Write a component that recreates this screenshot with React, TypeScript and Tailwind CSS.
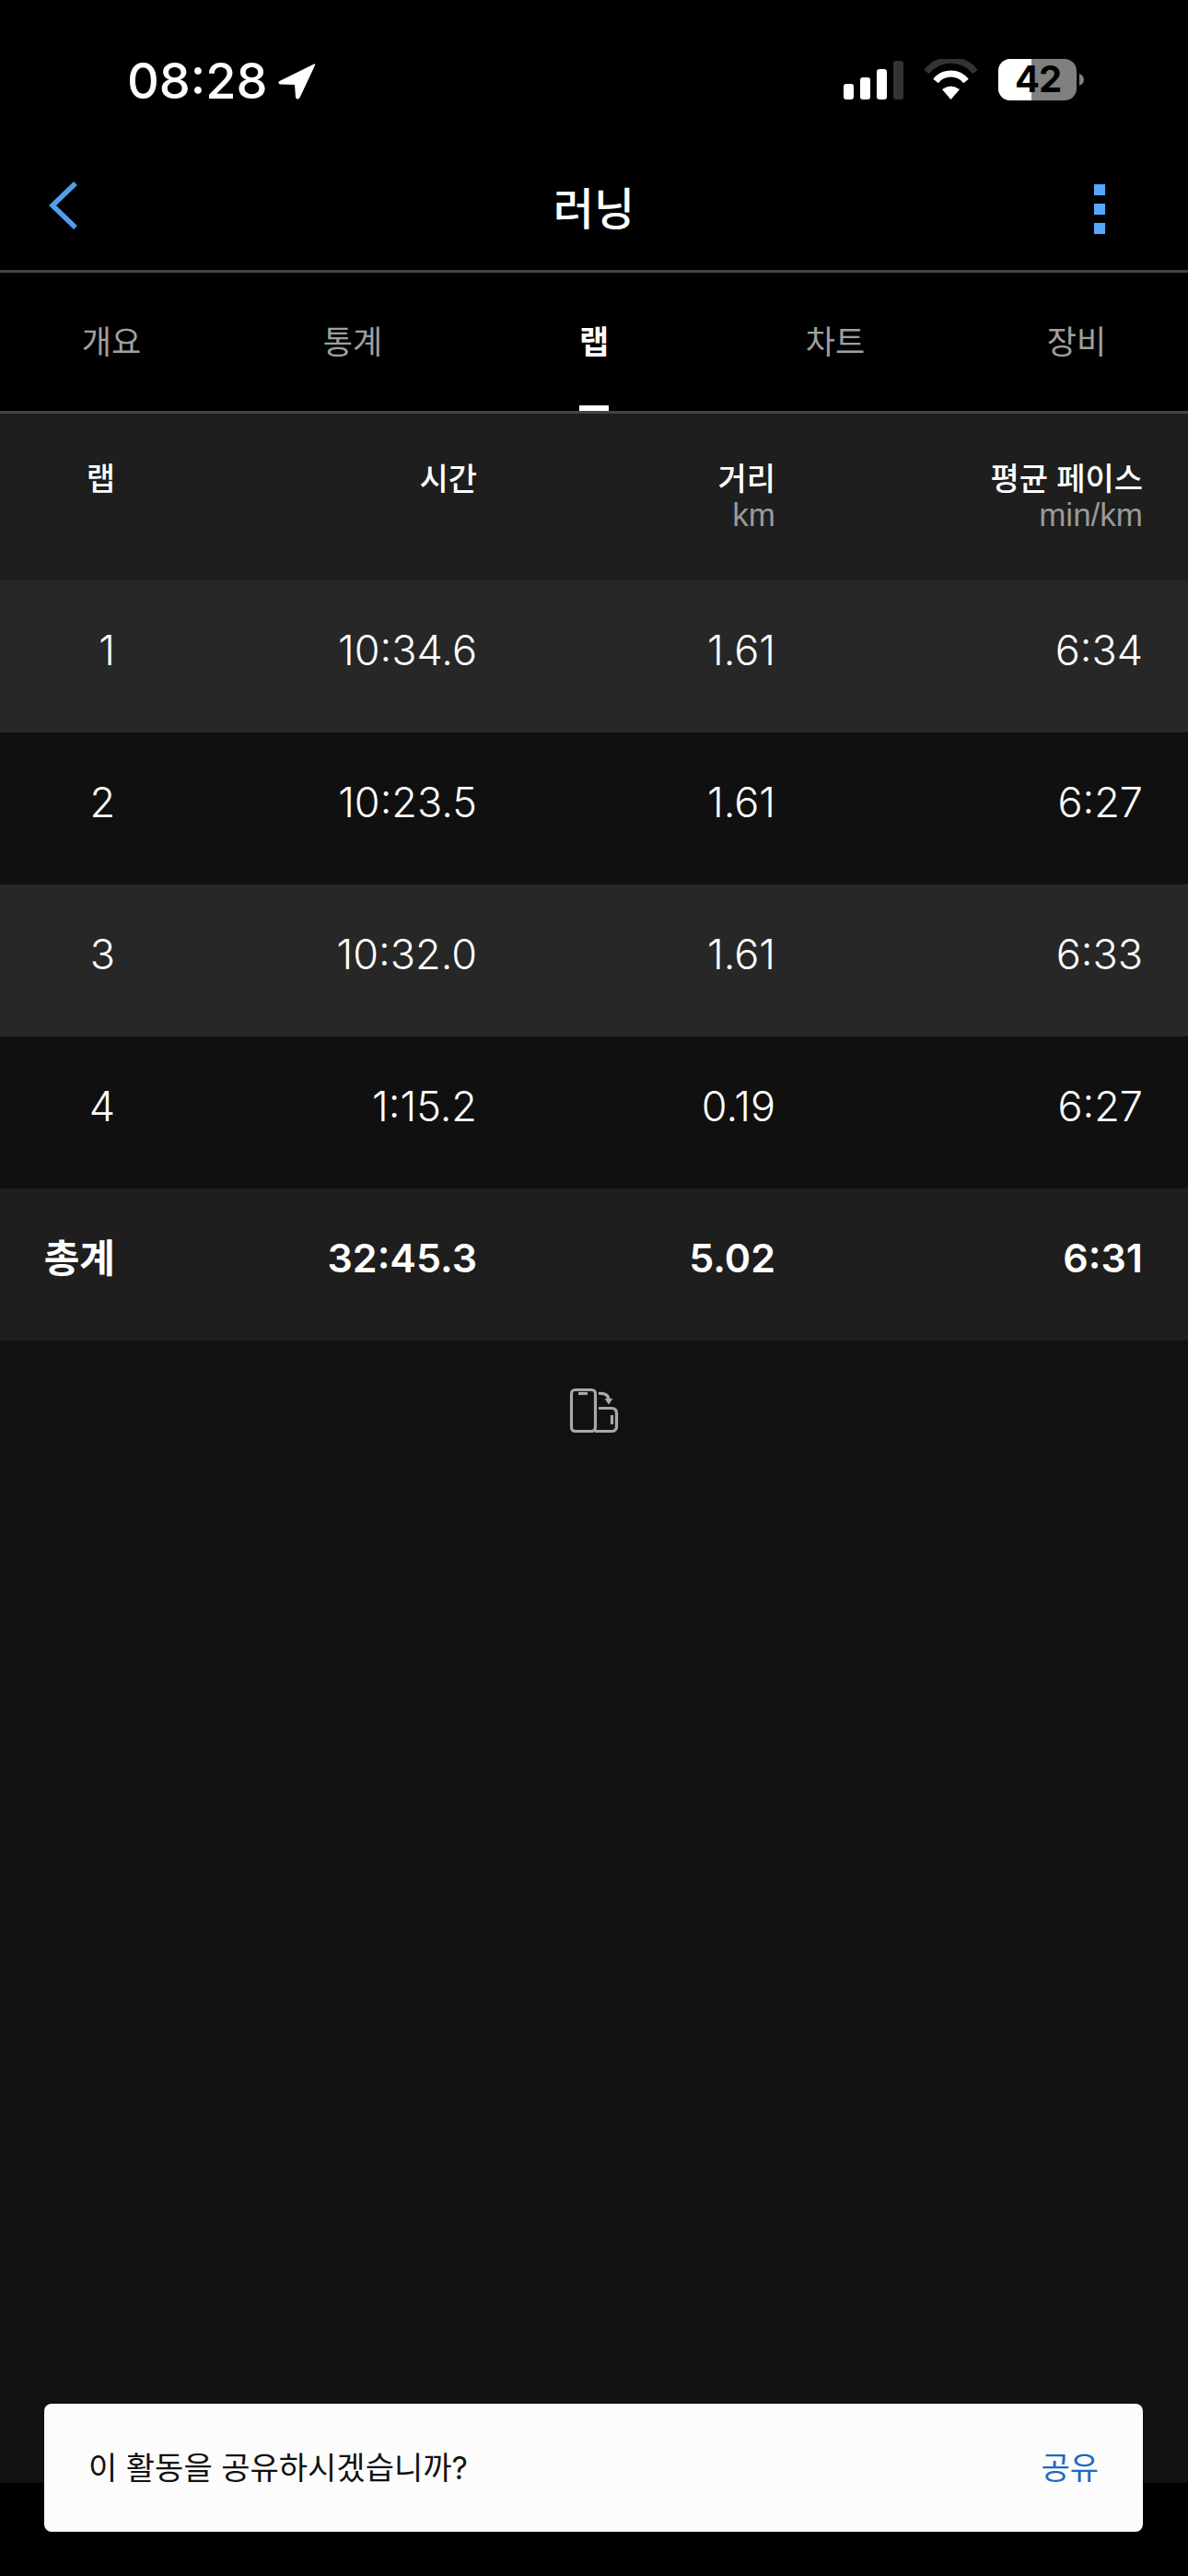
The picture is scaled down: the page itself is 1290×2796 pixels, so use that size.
const font = "font-['Inter','Noto_Sans_CJK_KR',sans-serif]";
const thin = "font-['Liberation_Sans','Noto_Sans_CJK_KR',sans-serif]";

const rows = [
  { lap: "1", time: "10:34.6", dist: "1.61", pace: "6:34", bg: "bg-[#272727]" },
  { lap: "2", time: "10:23.5", dist: "1.61", pace: "6:27", bg: "bg-[#101010]" },
  { lap: "3", time: "10:32.0", dist: "1.61", pace: "6:33", bg: "bg-[#272727]" },
  { lap: "4", time: "1:15.2", dist: "0.19", pace: "6:27", bg: "bg-[#101010]" },
];

function Row({ a, b, c, d, cls, first }: { a: string; b: string; c: string; d: string; cls: string; first?: string }) {
  return (
    <div className={`flex h-[165px] items-center pb-[14px] text-right text-white ${cls}`}>
      <div className={`w-[125px] shrink-0 ${first ?? ""}`}>{a}</div>
      <div className="w-[393px] shrink-0">{b}</div>
      <div className="w-[324px] shrink-0">{c}</div>
      <div className="w-[399px] shrink-0">{d}</div>
    </div>
  );
}

function Tab({ label, active }: { label: string; active?: boolean }) {
  return (
    <span className={`w-[66px] whitespace-nowrap text-center ${active ? "font-semibold text-white" : ""}`}>{label}</span>
  );
}

function StatusBar() {
  return (
    <div className="relative h-[160px] bg-black text-white">
      <div className="absolute left-[138px] top-[56px] text-[54px] font-medium leading-[64px]">08:28</div>
      <svg className="absolute left-[301px] top-[67px]" width="42" height="42" viewBox="0 0 42 42">
        <path d="M40 2.500 L2.500 21 Q0 23 3 24.500 L19 25 L20 39 Q22 42 24.500 39 L41 4 Q41.500 1.500 40 2.500Z" fill="#fff" />
      </svg>
      <svg className="absolute left-[916px] top-[64px]" width="262" height="46" viewBox="0 0 262 46">
        <rect x="0" y="27" width="11" height="17" rx="3" fill="#fff" />
        <rect x="18" y="20" width="11" height="24" rx="3" fill="#fff" />
        <rect x="36" y="11" width="11" height="33" rx="3" fill="#fff" />
        <rect x="54" y="2" width="11" height="42" rx="3" fill="#333" />
        <path d="M90 14 A 34 34 0 0 1 143 14" stroke="#333" strokeWidth="7" fill="none" />
        <path d="M100 24 A 21 21 0 0 1 133 24" stroke="#fff" strokeWidth="7" fill="none" />
        <path d="M107 33 Q116.500 26 126 33 L116.500 44Z" fill="#fff" />
        <rect x="168" y="0" width="85" height="45" rx="13" fill="#808080" />
        <path d="M181 0 H204 V45 H181 A13 13 0 0 1 168 32 V13 A13 13 0 0 1 181 0Z" fill="#fff" />
        <path d="M256 16 Q261 18 261 22.500 Q261 27 256 29Z" fill="#808080" />
      </svg>
      <div className="absolute left-[1099px] top-[62px] w-[56px] text-center text-[40px] font-bold leading-[48px] tracking-[-1px] text-black">42</div>
    </div>
  );
}

export default function App() {
  return (
    <div className={`relative flex h-[2796px] w-[1290px] flex-col overflow-hidden bg-black ${font}`}>
      <StatusBar />
      <div className="relative flex h-[136px] items-center justify-center border-b-[3px] border-[#444] bg-black">
        <svg className="absolute left-[52px] top-[36px]" width="34" height="54" viewBox="0 0 34 54">
          <path d="M30 3 L5 27 L30 51" fill="none" stroke="#4f9fee" strokeWidth="5.500" />
        </svg>
        <span className="text-[48px] font-medium leading-[60px] text-white">러닝</span>
        <div className="absolute left-[1188px] top-[40px] flex flex-col gap-[9px]">
          <div className="h-[12px] w-[12px] bg-[#55a8ff]" />
          <div className="h-[12px] w-[12px] bg-[#55a8ff]" />
          <div className="h-[12px] w-[12px] bg-[#55a8ff]" />
        </div>
      </div>
      <div className="relative flex h-[153px] justify-between border-b-[3px] border-[#444] bg-black px-[88px] pt-[53px] text-[35px] leading-[44px] text-[#a0a0a0]">
        <Tab label="개요" />
        <Tab label="통계" />
        <Tab label="랩" active />
        <Tab label="차트" />
        <Tab label="장비" />
        <div className="absolute left-[629px] top-[144px] h-[6px] w-[32px] bg-white" />
      </div>
      <div className="flex h-[181px] bg-[#1e1e1e] pt-[50px] text-right text-[34px] font-medium leading-[42px] text-white">
        <div className="w-[125px] shrink-0">랩</div>
        <div className="w-[393px] shrink-0">시간</div>
        <div className="w-[324px] shrink-0">
          거리
          <div className={`text-[35px] font-normal leading-[36px] text-[#999] ${thin}`}>km</div>
        </div>
        <div className="w-[399px] shrink-0">
          평균 페이스
          <div className={`text-[35px] font-normal leading-[36px] text-[#999] ${thin}`}>min/km</div>
        </div>
      </div>
      {rows.map((r) => (
        <Row key={r.lap} a={r.lap} b={r.time} c={r.dist} d={r.pace} cls={`text-[45px] font-light ${r.bg}`} />
      ))}
      <Row a="총계" b="32:45.3" c="5.02" d="6:31" cls="bg-[#1e1e1e] text-[43px] font-semibold" first="text-[42px]" />
      <div className="flex flex-1 justify-center bg-[#111] pt-[51px]">
        <svg width="54" height="50" viewBox="0 0 54 50" fill="none" stroke="#a8a8a8" strokeWidth="3.200">
          <rect x="2.500" y="2.500" width="26" height="45" rx="4" />
          <path d="M10 6.500 H20" />
          <path d="M32 22.500 H46 Q51.500 22.500 51.500 28 V42 Q51.500 47.500 46 47.500 H28" />
          <path d="M46.500 30 V40" />
          <path d="M32 6.500 Q43 5.500 43 14" />
          <path d="M38.500 12 L43 18.500 L47.500 12 Z" fill="#a8a8a8" stroke="none" />
        </svg>
      </div>
      <div className="h-[101px] bg-black" />
      <div className="absolute left-[48px] top-[2609px] flex h-[139px] w-[1193px] items-center justify-between rounded-[8px] bg-[#fcfcfc] pl-[48px] pr-[48px] text-[34px]">
        <span className="text-[#111]">이 활동을 공유하시겠습니까?</span>
        <span className="text-[#1f6bbd]">공유</span>
      </div>
    </div>
  );
}
